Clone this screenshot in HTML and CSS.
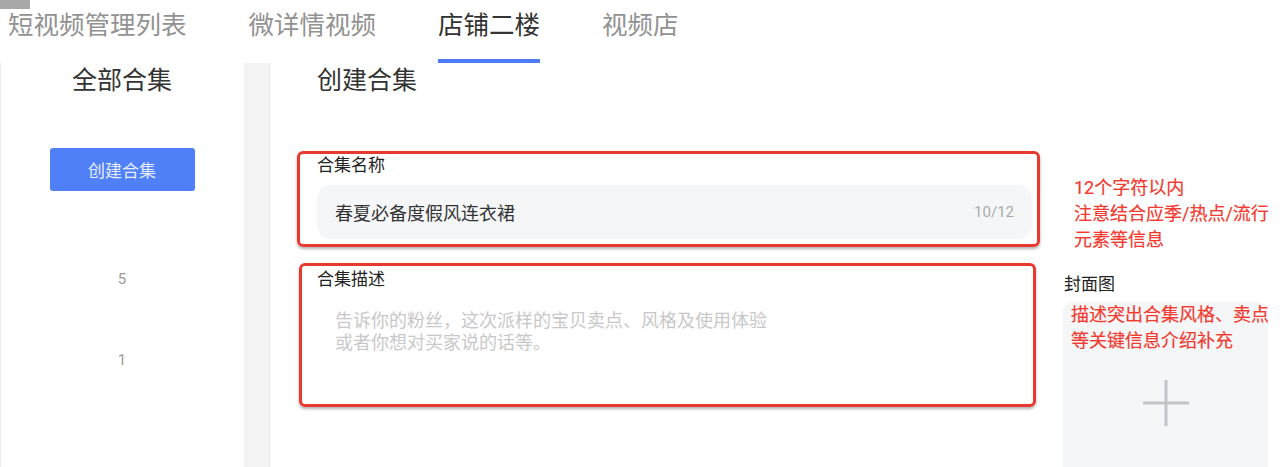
FILE: index.html
```html
<!DOCTYPE html>
<html lang="zh-CN">
  <head>
    <meta charset="UTF-8" />
    <meta name="viewport" content="width=device-width, initial-scale=1.0" />
    <title>店铺二楼 - 创建合集</title>
    <link rel="stylesheet" href="styles.css">
  </head>
  <body>
    <div class="corner-tag"></div>

    <!-- Tabs -->
    <nav class="tabs">
      <a class="tab">短视频管理列表</a>
      <a class="tab">微详情视频</a>
      <a class="tab active">店铺二楼</a>
      <a class="tab">视频店</a>
    </nav>

    <div class="content">
      <!-- Sidebar -->
      <aside class="sidebar">
        <h2 class="sidebar-title">全部合集</h2>
        <button class="btn-primary">创建合集</button>
        <div class="count first">5</div>
        <div class="count">1</div>
      </aside>

      <div class="gutter"></div>

      <!-- Main -->
      <main class="main">
        <div class="form-col">
          <h2 class="page-title">创建合集</h2>

          <div class="mark mark-name">
            <div class="field-label">合集名称</div>
            <div class="input">
              <span class="input-text">春夏必备度假风连衣裙</span>
              <span class="input-count">10/12</span>
            </div>
          </div>

          <div class="mark mark-desc">
            <div class="field-label">合集描述</div>
            <p class="placeholder">
              告诉你的粉丝，这次派样的宝贝卖点、风格及使用体验<br />
              或者你想对买家说的话等。
            </p>
          </div>
        </div>

        <div class="side-col">
          <p class="note">12个字符以内<br />注意结合应季/热点/流行<br />元素等信息</p>
          <div class="field-label cover-label">封面图</div>
          <div class="cover">
            <p class="note">描述突出合集风格、卖点<br />等关键信息介绍补充</p>
            <svg class="plus" width="48" height="48" viewBox="0 0 48 48">
              <path d="M24 1v46M1 24h46" stroke="#c2c4c9" stroke-width="3" fill="none" />
            </svg>
          </div>
        </div>
      </main>
    </div>
  </body>
</html>
```

FILE: styles.css
```css
body {
  margin: 0;
  background-color: #fff;
  font-family: Roboto, 'Noto Sans CJK SC', sans-serif;
  color: #333;
  width: 1280px;
  height: 467px;
  overflow: hidden;
  position: relative;
}
.corner-tag {
  position: absolute;
  top: 0;
  left: 0;
  width: 30px;
  height: 9px;
  background-color: #a8a8a8;
}
.tabs {
  display: flex;
  gap: 62px;
  padding: 8px 0 0 8px;
  height: 55px;
}
.tab {
  font-size: 25.5px;
  line-height: 34px;
  color: #929292;
  padding-bottom: 17px;
  border-bottom: 4px solid transparent;
}
.tab.active {
  color: #333;
  border-bottom-color: #4e7cf6;
}
.content {
  display: flex;
  height: 404px;
}
.sidebar {
  width: 242px;
  border-left: 1px solid #ececec;
  display: flex;
  flex-direction: column;
  align-items: center;
}
.sidebar-title {
  margin: 0;
  font-size: 25px;
  font-weight: 400;
  line-height: 36px;
  color: #333;
}
.btn-primary {
  margin-top: 49px;
  width: 145px;
  height: 43px;
  border: none;
  border-radius: 3px;
  background-color: #4f80f8;
  color: #e8eeff;
  font-family: inherit;
  font-size: 17px;
}
.count {
  font-size: 15px;
  line-height: 20px;
  color: #9a9a9a;
  margin-top: 61px;
}
.count.first {
  margin-top: 78px;
}
.gutter {
  width: 25px;
  margin-left: 1px;
  background-color: #f3f3f3;
  border-right: 1px solid #e6e6e6;
}
.main {
  flex: 1;
  display: flex;
}
.form-col {
  width: 793px;
}
.page-title {
  margin: 0 0 52px 47px;
  font-size: 25px;
  font-weight: 400;
  line-height: 36px;
  color: #333;
}
.mark {
  border: 3px solid #e8392e;
  border-radius: 6px;
  box-shadow: 0 2px 3px rgba(0, 0, 0, 0.3);
  box-sizing: border-box;
}
.mark-name {
  margin-left: 27px;
  width: 743px;
  height: 96px;
  padding: 0 5px 0 17px;
}
.mark-desc {
  margin: 16px 0 0 29px;
  width: 737px;
  height: 144px;
  padding: 3px 0 0 15px;
}
.field-label {
  font-size: 17px;
  line-height: 20px;
  color: #222;
}
.mark-name .field-label {
  margin-top: 1px;
}
.input {
  margin-top: 10px;
  height: 54px;
  border-radius: 14px;
  background-color: #f5f6f8;
  display: flex;
  align-items: center;
  justify-content: space-between;
  padding: 0 18px;
}
.input-text {
  font-size: 18px;
  color: #333;
}
.input-count {
  font-size: 15px;
  color: #aaa;
}
.placeholder {
  margin: 21px 0 0 18px;
  font-size: 18px;
  line-height: 22px;
  color: #c8c8c8;
}
.side-col {
  width: 205px;
  padding-top: 112px;
}
.note {
  margin: 0 0 0 11px;
  font-size: 18px;
  line-height: 26px;
  font-weight: 400;
  -webkit-text-stroke: 0.2px currentColor;
  color: #f23a2f;
  white-space: nowrap;
}
.cover-label {
  margin: 18px 0 0 1px;
  line-height: 26px;
}
.cover {
  margin-top: 5px;
  height: 180px;
  border-radius: 10px 10px 0 0;
  background-color: #f5f6f8;
  display: flex;
  flex-direction: column;
  align-items: center;
}
.cover .note {
  align-self: flex-start;
  margin: 0 0 0 8px;
}
.plus {
  margin-top: 25px;
}
```
